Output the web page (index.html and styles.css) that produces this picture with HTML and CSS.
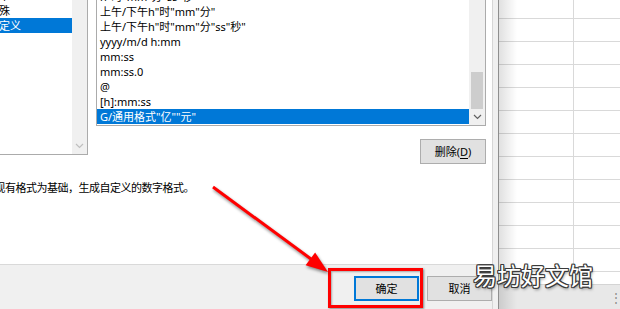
FILE: index.html
```html
<!DOCTYPE html>
<html><head>
<meta charset="utf-8">
<title>设置单元格格式</title>
<link rel="stylesheet" href="styles.css">
</head><body>

<div class="dialog">
<div class="inner">
<div class="page">
<div class="lists">
<div class="catlist">
<div class="items">
<div class="item">文本</div>
<div class="item">特殊</div>
<div class="item sel">自定义</div>
</div>
<div class="sbar"><div class="sbtn dim"><svg width="9" height="6" viewBox="0 0 9 6"><polyline points="1,1 4.5,4.5 8,1"/></svg></div></div>
</div>
<div class="right">
<div class="fmtlist">
<div class="items">
<div class="item">h"时"mm"分"</div>
<div class="item">h"时"mm"分"ss"秒"</div>
<div class="item">上午/下午h"时"mm"分"</div>
<div class="item">上午/下午h"时"mm"分"ss"秒"</div>
<div class="item">yyyy/m/d h:mm</div>
<div class="item">mm:ss</div>
<div class="item">mm:ss.0</div>
<div class="item">@</div>
<div class="item">[h]:mm:ss</div>
<div class="item sel">G/通用格式"亿""元"</div>
</div>
<div class="sbar"><div class="thumb"></div><div class="sbtn"><svg width="9" height="6" viewBox="0 0 9 6"><polyline points="1,1 4.5,4.5 8,1"/></svg></div></div>
</div>
<div class="btn del">删除(<u>D</u>)</div>
</div>
</div>
<div class="desc">以现有格式为基础，生成自定义的数字格式。</div>
</div>
<div class="foot">
<div class="btn ok">确定</div>
<div class="btn">取消</div>
</div>
</div>
</div>

<div class="sheet">
<div class="grid"></div>
<div class="tabs"><span>⋮</span></div>
</div>

<!-- annotations drawn over the screenshot -->
<div class="redbox"></div>
<svg class="arrow" width="620" height="309" viewBox="0 0 620 309">
<line x1="213" y1="187" x2="311" y2="259" stroke="#f00" stroke-width="3"/>
<polygon points="328,272 305.6,265.3 315.1,252.4" fill="#f00"/>
</svg>
<div class="mark">易坊好文馆</div>

</body></html>
```

FILE: styles.css
```css
body{margin:0;width:620px;height:309px;overflow:hidden;position:relative;display:flex;font-family:"Noto Sans","Noto Sans CJK SC",sans-serif;font-size:11px;color:#000;background:#fff;}

.dialog{width:499px;height:309px;flex:none;background:#f0f0f0;border-right:1px solid #8e8e8e;box-sizing:border-box;}
.inner{width:493px;height:309px;display:flex;flex-direction:column;border-right:1px solid #d6d6d6;box-sizing:border-box;}
.page{height:265px;flex:none;background:#fff;border-bottom:1px solid #d9d9d9;box-sizing:border-box;overflow:hidden;}

.lists{display:flex;align-items:flex-start;}
.catlist,.fmtlist{display:flex;background:#fff;border:1px solid #ababab;box-sizing:border-box;}
.catlist{width:117px;height:168px;margin:-13px 0 0 -29px;flex:none;}
.items{flex:1;overflow:hidden;}
.item{height:15px;line-height:15px;white-space:nowrap;}
.catlist .item{padding-left:16px;}
.fmtlist .item{padding-left:3px;}
.item.sel{background:#0078d7;color:#fff;}

.sbar{display:flex;flex-direction:column;background:#f0f0f0;}
.catlist .sbar{width:15px;}
.fmtlist .sbar{width:16px;}
.thumb{height:37px;margin:98px 2px 0;background:#cdcdcd;}
.sbtn{height:16px;margin-top:auto;display:flex;align-items:center;justify-content:center;}
.sbtn svg{fill:none;stroke:#606060;stroke-width:1.2;}
.sbtn.dim svg{stroke:#bfbfbf;}

.right{display:flex;flex-direction:column;align-items:flex-end;width:390px;margin-left:8px;}
.fmtlist{width:390px;height:153px;margin-top:-27px;}

.btn{width:65px;height:25px;line-height:23px;text-align:center;background:#e1e1e1;border:1px solid #adadad;box-sizing:border-box;}
.btn u{text-underline-offset:2px;}
.del{width:66px;margin-top:13px;}
.ok{border:2px solid #0078d7;line-height:21px;}

.desc{margin:16px 0 0 -16px;line-height:15px;letter-spacing:-0.5px;white-space:nowrap;}

.foot{flex:1;display:flex;justify-content:flex-end;gap:8px;padding-top:11px;}

.sheet{flex:1;position:relative;display:flex;flex-direction:column;background:#fff;}
.sheet:before{content:'';position:absolute;left:0;top:0;bottom:0;width:18px;background:linear-gradient(to right,rgba(0,0,0,.12),rgba(0,0,0,0));}
.grid{flex:1;background:linear-gradient(to right,transparent 74px,#d9d9d9 74px,#d9d9d9 75px,transparent 75px),repeating-linear-gradient(to bottom,transparent 0,transparent 22px,#d9d9d9 22px,#d9d9d9 23px);background-position:0 0,0 -4px;}
.tabs{height:24px;flex:none;background:#e8e8e8;border-top:1px solid #d4d4d4;display:flex;justify-content:flex-end;align-items:center;color:#8a8a8a;font-size:12px;}
.tabs span{margin-right:-2px;}

.redbox{position:absolute;left:328px;top:268px;width:95px;height:40px;border:3px solid #f00;box-sizing:border-box;box-shadow:1px 1px 2px rgba(0,0,0,.45),inset 1px 1px 2px rgba(0,0,0,.3);}
.arrow{position:absolute;left:0;top:0;pointer-events:none;filter:drop-shadow(1px 2px 1.5px rgba(0,0,0,.45));}
.mark{position:absolute;left:473px;top:263px;font-family:"Noto Sans CJK SC",sans-serif;font-size:24px;line-height:24px;color:#fff;white-space:nowrap;text-shadow:1px 0 #3a3a3a,-1px 0 #3a3a3a,0 1px #3a3a3a,0 -1px #3a3a3a,1px 1px #3a3a3a,-1px -1px #3a3a3a,1px -1px #3a3a3a,-1px 1px #3a3a3a,1px 2px 3px rgba(0,0,0,.5);}
```
